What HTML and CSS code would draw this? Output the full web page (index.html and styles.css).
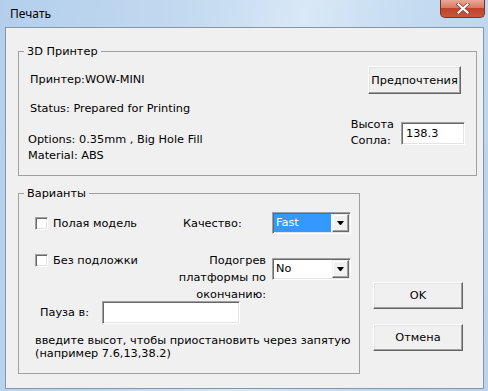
FILE: index.html
```html
<!DOCTYPE html>
<html lang="ru">
<head>
    <meta charset="UTF-8">
    <title>Печать</title>
    <link rel="stylesheet" href="styles.css">
</head>
<body>
    <div class="window">
        <div class="titlebar">
            <span class="title">Печать</span>
            <div class="close-btn">
                <svg width="14" height="11" viewBox="0 0 14 11">
                    <path d="M2.5 1.5 L11.5 9.5 M11.5 1.5 L2.5 9.5" stroke="#8a3a2c" stroke-width="3.6" stroke-linecap="square"/>
                    <path d="M2.5 1.5 L11.5 9.5 M11.5 1.5 L2.5 9.5" stroke="#fff" stroke-width="2.2" stroke-linecap="square"/>
                </svg>
            </div>
        </div>
        <div class="client">
            <!-- 3D printer box -->
            <div class="group group-printer">
                <span class="group-title">3D Принтер</span>
                <div class="printer-info">
                    <div class="info-line">Принтер:WOW-MINI</div>
                    <div class="info-line status">Status: Prepared for Printing</div>
                    <div class="info-block">Options: 0.35mm , Big Hole Fill<br>Material: ABS</div>
                </div>
                <div class="printer-side">
                    <button class="btn btn-prefs">Предпочтения</button>
                    <div class="nozzle-row">
                        <span class="nozzle-label">Высота<br>Сопла:</span>
                        <input class="textbox nozzle-input" type="text" value="138.3">
                    </div>
                </div>
            </div>

            <div class="bottom-row">
                <!-- options box -->
                <div class="group group-options">
                    <span class="group-title">Варианты</span>
                    <div class="opt-row opt-row-1">
                        <div class="check-cell">
                            <span class="checkbox"></span>
                            <span>Полая модель</span>
                        </div>
                        <span class="quality-label">Качество:</span>
                        <div class="combo">
                            <span class="combo-value selected">Fast</span>
                            <span class="combo-arrow"><i></i></span>
                        </div>
                    </div>
                    <div class="opt-row opt-row-2">
                        <div class="check-cell">
                            <span class="checkbox"></span>
                            <span>Без подложки</span>
                        </div>
                        <span class="heat-label">Подогрев<br>платформы по<br>окончанию:</span>
                        <div class="combo combo-heat">
                            <span class="combo-value">No</span>
                            <span class="combo-arrow"><i></i></span>
                        </div>
                    </div>
                    <div class="pause-row">
                        <span class="pause-label">Пауза в:</span>
                        <input class="textbox pause-input" type="text" value="">
                    </div>
                    <div class="hint">введите высот, чтобы приостановить через запятую<br>(например 7.6,13,38.2)</div>
                </div>

                <div class="actions">
                    <button class="btn btn-action">OK</button>
                    <button class="btn btn-action">Отмена</button>
                </div>
            </div>
        </div>
    </div>
</body>
</html>
```

FILE: styles.css
```css
/* dialog window */
html, body {
    margin: 0;
    padding: 0;
}

body {
    width: 488px;
    height: 391px;
    overflow: hidden;
    font-family: "DejaVu Sans", "Liberation Sans", sans-serif;
    font-size: 11.3px;
    color: #000;
}

.window {
    height: 391px;
    display: flex;
    flex-direction: column;
    background: linear-gradient(100deg, #b3cfec 0%, #c3daf0 35%, #d9e8f6 55%, #c4dbf1 75%, #b9d3ee 100%);
}

.titlebar {
    height: 27px;
    display: flex;
    align-items: flex-start;
}

.title {
    font-family: "Noto Sans", "Open Sans", sans-serif;
    font-size: 12px;
    line-height: 16px;
    padding: 6px 0 0 10px;
}

.close-btn {
    margin-left: auto;
    margin-right: 3px;
    width: 45px;
    height: 18px;
    box-sizing: border-box;
    border: 1px solid #7a3226;
    border-top: none;
    border-radius: 0 0 5px 5px;
    background: linear-gradient(#e9a896 0%, #d77b66 45%, #c0432b 50%, #c9573c 100%);
    display: flex;
    align-items: center;
    justify-content: center;
}

.client {
    flex: 1;
    margin: 0 4px 2px 5px;
    border: 1px solid #8397ab;
    background: #f0f0f0;
    padding: 23px 6px 0 12px;
}

/* group boxes */
.group {
    position: relative;
    box-sizing: border-box;
    border: 1px solid #a0a0a0;
}

.group-title {
    position: absolute;
    top: -8px;
    left: 5px;
    padding: 0 3px;
    line-height: 15px;
    background: #f0f0f0;
}

.group-printer {
    height: 125px;
    display: flex;
    justify-content: space-between;
}

.printer-info {
    padding: 20px 0 0 11px;
}

.info-line {
    line-height: 15px;
}

.status {
    margin-top: 14px;
}

.info-block {
    margin: 16px 0 0 -2px;
    line-height: 16px;
}

.printer-side {
    display: flex;
    flex-direction: column;
    align-items: flex-end;
    padding: 14px 11px 0 0;
}

.nozzle-row {
    display: flex;
    align-items: center;
    gap: 7px;
    margin-top: 23px;
}

.nozzle-label {
    line-height: 16px;
}

/* classic controls */
.btn {
    box-sizing: border-box;
    font: inherit;
    color: #000;
    background: #f0f0f0;
    border: 1px solid;
    border-color: #fff #646464 #646464 #fff;
    box-shadow: inset -1px -1px 0 #a0a0a0, inset 1px 1px 0 #e3e3e3;
    padding: 0;
}

.btn-prefs {
    width: 93px;
    height: 28px;
    margin-right: 4px;
}

.textbox {
    box-sizing: border-box;
    font: inherit;
    color: #000;
    background: #fff;
    border: 1px solid;
    border-color: #a0a0a0 #fff #fff #a0a0a0;
    box-shadow: inset 1px 1px 0 #696969, inset -1px -1px 0 #e3e3e3;
    padding: 0 0 0 4px;
    outline: none;
}

.nozzle-input {
    width: 64px;
    height: 23px;
}

.checkbox {
    box-sizing: border-box;
    width: 13px;
    height: 13px;
    background: #fff;
    border: 1px solid;
    border-color: #a0a0a0 #fff #fff #a0a0a0;
    box-shadow: inset 1px 1px 0 #696969, inset -1px -1px 0 #e3e3e3;
}

.combo {
    box-sizing: border-box;
    width: 79px;
    height: 22px;
    display: flex;
    padding: 1px;
    background: #fff;
    border: 1px solid;
    border-color: #a0a0a0 #fff #fff #a0a0a0;
    box-shadow: inset 1px 1px 0 #696969, inset -1px -1px 0 #e3e3e3;
}

.combo-value {
    flex: 1;
    margin-right: 1px;
    padding-left: 2px;
    line-height: 18px;
}

.combo-value.selected {
    background: #3399ff;
    color: #fff;
}

.combo-arrow {
    box-sizing: border-box;
    width: 17px;
    height: 18px;
    background: #f0f0f0;
    border: 1px solid;
    border-color: #f0f0f0 #696969 #696969 #f0f0f0;
    box-shadow: inset -1px -1px 0 #a0a0a0, inset 1px 1px 0 #fff;
    display: flex;
    align-items: center;
    justify-content: center;
}

.combo-arrow i {
    width: 1px;
    height: 0;
    border-left: 3px solid transparent;
    border-right: 3px solid transparent;
    border-top: 4px solid #000;
}

/* options box */
.bottom-row {
    display: flex;
    margin-top: 17px;
}

.group-options {
    width: 342px;
    height: 181px;
}

.opt-row {
    display: flex;
}

.opt-row-1 {
    align-items: center;
    height: 22px;
    margin-top: 18px;
}

.opt-row-2 {
    align-items: flex-start;
    margin-top: 18px;
}

.check-cell {
    box-sizing: border-box;
    width: 164px;
    padding-left: 16px;
    display: flex;
    align-items: center;
    gap: 5px;
    line-height: 17px;
}

.opt-row-2 .check-cell {
    width: 156px;
}

.quality-label {
    width: 89px;
}

.heat-label {
    box-sizing: border-box;
    width: 97px;
    padding-right: 6px;
    text-align: right;
    line-height: 17px;
}

.combo-heat {
    margin-top: 6px;
}

.pause-row {
    display: flex;
    align-items: center;
    margin-top: -2px;
    padding-left: 21px;
}

.pause-label {
    width: 62px;
}

.pause-input {
    width: 138px;
    height: 23px;
}

.hint {
    padding-left: 16px;
    margin-top: 10px;
    line-height: 13px;
}

.actions {
    display: flex;
    flex-direction: column;
    gap: 15px;
    margin-left: 13px;
    padding-top: 89px;
}

.btn-action {
    width: 90px;
    height: 27px;
}
```
